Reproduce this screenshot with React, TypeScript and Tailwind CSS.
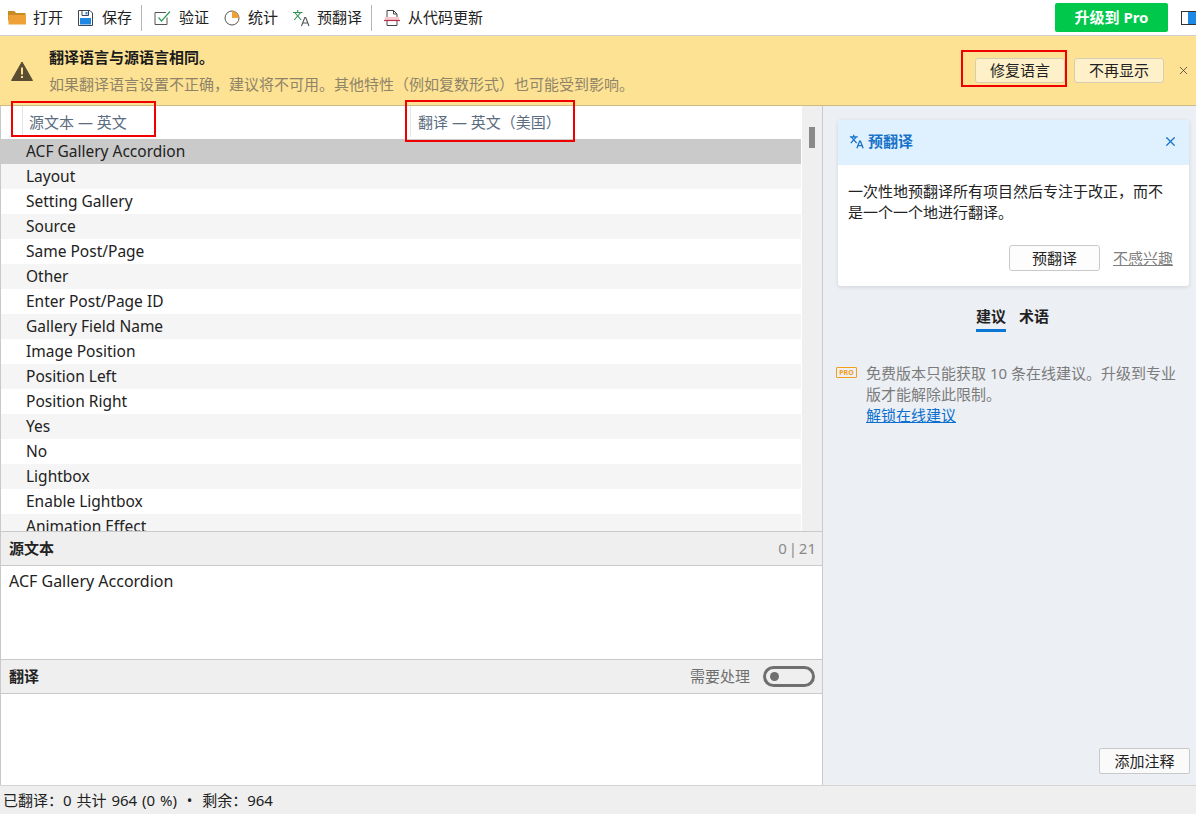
import { X } from 'lucide-react'

const font = { fontFamily: '"Noto Sans", "Noto Sans CJK SC", sans-serif' }

const rows = [
    'ACF Gallery Accordion',
    'Layout',
    'Setting Gallery',
    'Source',
    'Same Post/Page',
    'Other',
    'Enter Post/Page ID',
    'Gallery Field Name',
    'Image Position',
    'Position Left',
    'Position Right',
    'Yes',
    'No',
    'Lightbox',
    'Enable Lightbox',
]

function TranslateIcon({ color, accent, width = 1.1, size = 18 }: { color: string; accent: string; width?: number; size?: number }) {
    return (
        <svg width={size} height={size} viewBox="0 0 18 18" fill="none">
            <path d="M1 3.500h9.500M5.700 1v2.500M2.700 3.500l6.500 7.500M8.700 3.500l-6.500 7.500" stroke={accent} strokeWidth={width} />
            <path d="M9.500 17 12.800 8.500h.9L17 17M10.700 14h5.100" stroke={color} strokeWidth={width} />
        </svg>
    )
}

function Toolbar() {
    return (
        <div className="h-[36px] shrink-0 flex items-center bg-white border-b border-[#cfcfcf] text-[15px] text-[#222] pl-[8px]">
            <svg width="18" height="15" viewBox="0 0 18 15" className="mr-[7px]">
                <path d="M0 1h6.500l1.500 2h9.500v2H2.500L0 12z" fill="#c98a22" />
                <path d="M.5 5h17.500v9.500H.5z" fill="#eda136" />
            </svg>
            <span>打开</span>
            <svg width="15" height="16" viewBox="0 0 15 16" className="ml-[15px] mr-[9px]">
                <path d="M.5 .5h11.500l2.500 2.500v12.500H.5z" fill="#fff" stroke="#3b4652" />
                <rect x="2" y="8" width="11" height="6.500" fill="#1e88e5" />
                <path d="M4 1v4.500h6.500V1" fill="none" stroke="#3b4652" />
                <rect x="7.500" y="2" width="2" height="2.500" fill="#1e88e5" />
            </svg>
            <span>保存</span>
            <div className="w-px h-[26px] bg-[#b5b5b5] ml-[9px] mr-[12px]" />
            <svg width="17" height="16" viewBox="0 0 17 16" className="mr-[8px]">
                <path d="M13 7.500V14.500H1V2.500h11" fill="none" stroke="#555" />
                <path d="M4.500 7.500 7.500 11 16 1.500" fill="none" stroke="#2f9e5a" strokeWidth="1.200" />
            </svg>
            <span>验证</span>
            <svg width="16" height="16" viewBox="0 0 16 16" className="ml-[15px] mr-[8px]">
                <circle cx="8" cy="8" r="7" fill="#fff" stroke="#555" />
                <path d="M8 1a7 7 0 0 1 7 7H8z" fill="#eda136" />
            </svg>
            <span>统计</span>
            <div className="ml-[14px] mr-[7px] flex">
                <TranslateIcon color="#555" accent="#2f8f4f" />
            </div>
            <span>预翻译</span>
            <div className="w-px h-[26px] bg-[#b5b5b5] ml-[9px] mr-[12px]" />
            <svg width="16" height="16" viewBox="0 0 16 16" className="mr-[8px]">
                <path d="M3 7V.5h6.500L13 4v3M3 11v4.500h10V11M9.500.5V4H13" fill="none" stroke="#444" />
                <rect x="1" y="7" width="14" height="3" fill="#f7c9d0" />
                <path d="M0 10.500h16" stroke="#b8324a" strokeWidth="1.200" />
            </svg>
            <span>从代码更新</span>
            <div className="ml-auto w-[113px] h-[29px] bg-[#00c84a] rounded-[2px] flex items-center justify-center text-white font-bold text-[15px]">
                升级到 Pro
            </div>
            <div className="ml-[13px] w-[16px] h-[14px] border border-[#333] bg-white flex justify-end shrink-0 mr-[-1px]">
                <div className="w-[8px] bg-[#1e88e5]" />
            </div>
        </div>
    )
}

function Banner() {
    return (
        <div className="relative h-[70px] shrink-0 bg-[#fde294] border-b border-[#cdbb83] flex items-center">
            <svg width="22" height="20" viewBox="0 0 22 20" className="ml-[11px] mr-[16px]">
                <path d="M11 1 21.500 19.500H.5z" fill="#5a4d32" stroke="#5a4d32" strokeLinejoin="round" />
                <rect x="10" y="6.500" width="2" height="7" fill="#fde294" />
                <rect x="10" y="15" width="2" height="2" fill="#fde294" />
            </svg>
            <div className="flex flex-col gap-[7px]">
                <div className="text-[15px] leading-[20px] font-bold text-[#1a1a1a]">翻译语言与源语言相同。</div>
                <div className="text-[15px] leading-[20px] text-[#8f8467]">如果翻译语言设置不正确，建议将不可用。其他特性（例如复数形式）也可能受到影响。</div>
            </div>
            <div className="ml-auto flex items-center">
                <div className="w-[90px] h-[25px] rounded-[3px] bg-[#fef0c9] border border-[#d6cdb3] text-[15px] text-[#222] flex items-center justify-center">修复语言</div>
                <div className="ml-[9px] w-[90px] h-[25px] rounded-[3px] bg-[#fef0c9] border border-[#d6cdb3] text-[15px] text-[#222] flex items-center justify-center">不再显示</div>
                <X size={13} strokeWidth={1.500} color="#444" className="ml-[13px] mr-[6px]" />
            </div>
        </div>
    )
}

function TranslationList() {
    return (
        <div className="h-[425px] shrink-0 flex overflow-hidden">
            <div className="flex-1 min-w-0 flex flex-col">
                <div className="h-[33px] shrink-0 flex items-end pb-[2px] text-[15px] text-[#5b6c80] bg-white">
                    <div className="w-[389px] pl-[21px]">
                        <div className="border-l border-[#e4e4e4] pl-[6px] h-[31px] leading-[33px]">源文本 — 英文</div>
                    </div>
                    <div className="flex-1">
                        <div className="border-l border-[#e4e4e4] pl-[7px] ml-[20px] h-[31px] leading-[33px]">翻译 — 英文（美国）</div>
                    </div>
                </div>
                <div className="flex-1 overflow-hidden">
                    {rows.map((row, i) => (
                        <div
                            key={row}
                            className={`h-[25px] leading-[25px] pl-[25px] text-[15.500px] text-[#222] ${i === 0 ? 'bg-[#cacaca]' : i % 2 === 1 ? 'bg-[#f5f5f5]' : 'bg-white'}`}
                        >
                            {row}
                        </div>
                    ))}
                    <div className="h-[17px] overflow-hidden bg-[#f5f5f5] pl-[25px] text-[15.500px] leading-[25px] text-[#222]">Animation Effect</div>
                </div>
            </div>
            <div className="w-[21px] shrink-0 bg-[#efefef] border-l border-white pt-[21px] flex justify-center">
                <div className="w-[6px] h-[21px] bg-[#8a8a8a]" />
            </div>
        </div>
    )
}

function Editors() {
    return (
        <div className="flex-1 min-h-0 flex flex-col">
            <div className="h-[35px] shrink-0 bg-[#efefef] border-y border-[#c9c9c9] flex items-center justify-between pl-[8px] pr-[6px]">
                <span className="text-[15px] font-bold text-[#222]">源文本</span>
                <span className="text-[15px] text-[#8a8a8a] [word-spacing:-2px]">0 | 21</span>
            </div>
            <div className="h-[93px] shrink-0 bg-white pl-[8px] pt-[3px] text-[16px] leading-[24px] text-[#222]">ACF Gallery Accordion</div>
            <div className="h-[35px] shrink-0 bg-[#efefef] border-y border-[#c9c9c9] flex items-center justify-between pl-[8px] pr-[7px]">
                <span className="text-[15px] font-bold text-[#222]">翻译</span>
                <div className="flex items-center">
                    <span className="text-[15px] text-[#6f6f6f] mr-[13px]">需要处理</span>
                    <div className="w-[52px] h-[21px] rounded-full border-[3px] border-[#6f6f6f] flex items-center pl-[4px]">
                        <div className="w-[9px] h-[9px] rounded-full bg-[#6f6f6f]" />
                    </div>
                </div>
            </div>
            <div className="flex-1 bg-white" />
        </div>
    )
}

function Sidebar() {
    return (
        <div className="flex-1 min-w-0 bg-[#eceff4] flex flex-col relative">
            <div className="mt-[14px] ml-[15px] w-[351px] h-[166px] rounded-[3px] bg-white shadow-[0_1px_4px_rgba(0,0,0,0.12)] overflow-hidden shrink-0">
                <div className="h-[45px] pb-[2px] bg-[#dff0fe] flex items-center pl-[11px] pr-[11px]">
                    <TranslateIcon color="#1673c9" accent="#1673c9" width={1.600} size={15} />
                    <span className="ml-[4px] text-[15px] font-bold text-[#1673c9]">预翻译</span>
                    <X size={15} strokeWidth={2} color="#1673c9" className="ml-auto" />
                </div>
                <div className="px-[10px] pt-[16px] w-[336px] text-[15px] leading-[21px] text-[#222]">
                    一次性地预翻译所有项目然后专注于改正，而不是一个一个地进行翻译。
                </div>
                <div className="mt-[22px] flex items-center justify-end pr-[16px]">
                    <div className="w-[91px] h-[26px] rounded-[3px] bg-[#fdfdfd] border border-[#c9c9c9] text-[15px] text-[#222] flex items-center justify-center">预翻译</div>
                    <span className="ml-[13px] text-[15px] text-[#7f7f7f] underline">不感兴趣</span>
                </div>
            </div>
            <div className="mt-[17px] flex justify-center gap-[13px] text-[15px] font-bold text-[#222] pl-[6px]">
                <div className="h-[29px] border-b-[3px] border-[#0b76d6] leading-[26px]">建议</div>
                <div className="h-[29px] leading-[26px]">术语</div>
            </div>
            <div className="mt-[31px] ml-[13px] mr-[17px] flex items-start">
                <div className="mt-[4px] w-[21px] h-[11px] shrink-0 rounded-[1px] border border-[#f59e1c] text-[7px] leading-[9px] font-bold text-[#f59e1c] text-center">PRO</div>
                <div className="ml-[9px] text-[15px] leading-[21px] text-[#7b7b7b]">
                    免费版本只能获取 10 条在线建议。升级到专业版才能解除此限制。
                    <div className="text-[#0b6fd0] underline">解锁在线建议</div>
                </div>
            </div>
            <div className="absolute right-[6px] bottom-[11px] w-[91px] h-[26px] rounded-[2px] bg-[#fafafa] border border-[#c9c9c9] text-[15px] text-[#222] flex items-center justify-center">添加注释</div>
        </div>
    )
}

export default function App() {
    return (
        <div className="relative w-[1196px] h-[814px] overflow-hidden flex flex-col bg-white" style={font}>
            <Toolbar />
            <Banner />
            <div className="flex-1 min-h-0 flex">
                <div className="w-[823px] shrink-0 flex flex-col border-r border-[#c9c9c9] border-l border-l-[#c9c9c9]">
                    <TranslationList />
                    <Editors />
                </div>
                <Sidebar />
            </div>
            <div className="h-[29px] shrink-0 bg-[#efefef] border-t border-[#d4d4d4] pl-[3px] text-[15px] leading-[29px] text-[#222] [word-spacing:1px]">
                已翻译：0 共计 964 (0 %) &nbsp;•&nbsp; 剩余：964
            </div>

            {/* red annotation boxes drawn on top of the screenshot */}
            <div className="absolute left-[11px] top-[101px] w-[145px] h-[36px] border-[2px] border-[#f00000]" />
            <div className="absolute left-[405px] top-[100px] w-[170px] h-[42px] border-[2px] border-[#f00000]" />
            <div className="absolute left-[961px] top-[50px] w-[106px] h-[37px] border-[2px] border-[#f00000]" />
        </div>
    )
}
